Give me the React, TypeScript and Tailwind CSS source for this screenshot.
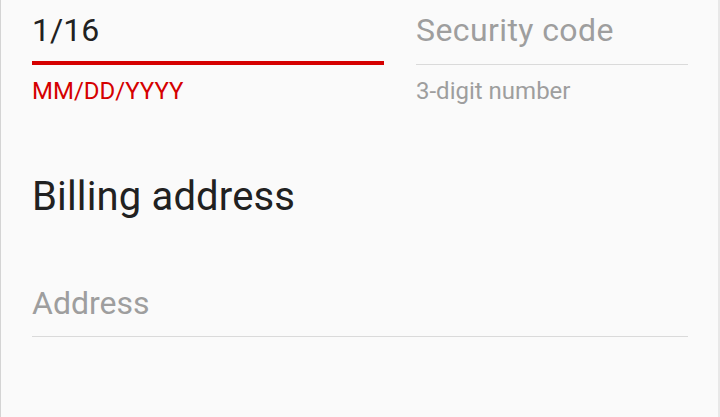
export default function App() {
  return (
    <div className="w-[720px] h-[417px] overflow-hidden bg-[#fafafa] border-l border-l-[#d4d4d4] border-r-2 border-r-[#e8e8e8] font-['Roboto',sans-serif]">
      <div className="pl-[31px] pr-[30px] pt-[10px]">
        <div className="flex gap-[32px]">
          <div className="w-[352px] flex flex-col">
            <div className="text-[32px] leading-[40px] text-[#212121]">1/16</div>
            <div className="mt-[11px] h-[4px] bg-[#d50000]" />
            <div className="mt-[10px] text-[24px] leading-[32px] text-[#d50000]">MM/DD/YYYY</div>
          </div>
          <div className="flex-1 flex flex-col">
            <div className="text-[32px] leading-[40px] tracking-[0.4px] text-[#9e9e9e]">Security code</div>
            <div className="mt-[11px] h-[4px] flex items-end">
              <div className="h-px w-full bg-[#dadada]" />
            </div>
            <div className="mt-[10px] text-[24px] leading-[32px] text-[#9e9e9e]">3-digit number</div>
          </div>
        </div>

        <h2 className="mt-[66px] text-[40px] leading-[48px] tracking-[0.15px] text-[#212121]">Billing address</h2>

        <div className="mt-[62px] flex flex-col">
          <div className="text-[32px] leading-[40px] text-[#9e9e9e]">Address</div>
          <div className="mt-[13px] h-px bg-[#dadada]" />
        </div>
      </div>
    </div>
  );
}
